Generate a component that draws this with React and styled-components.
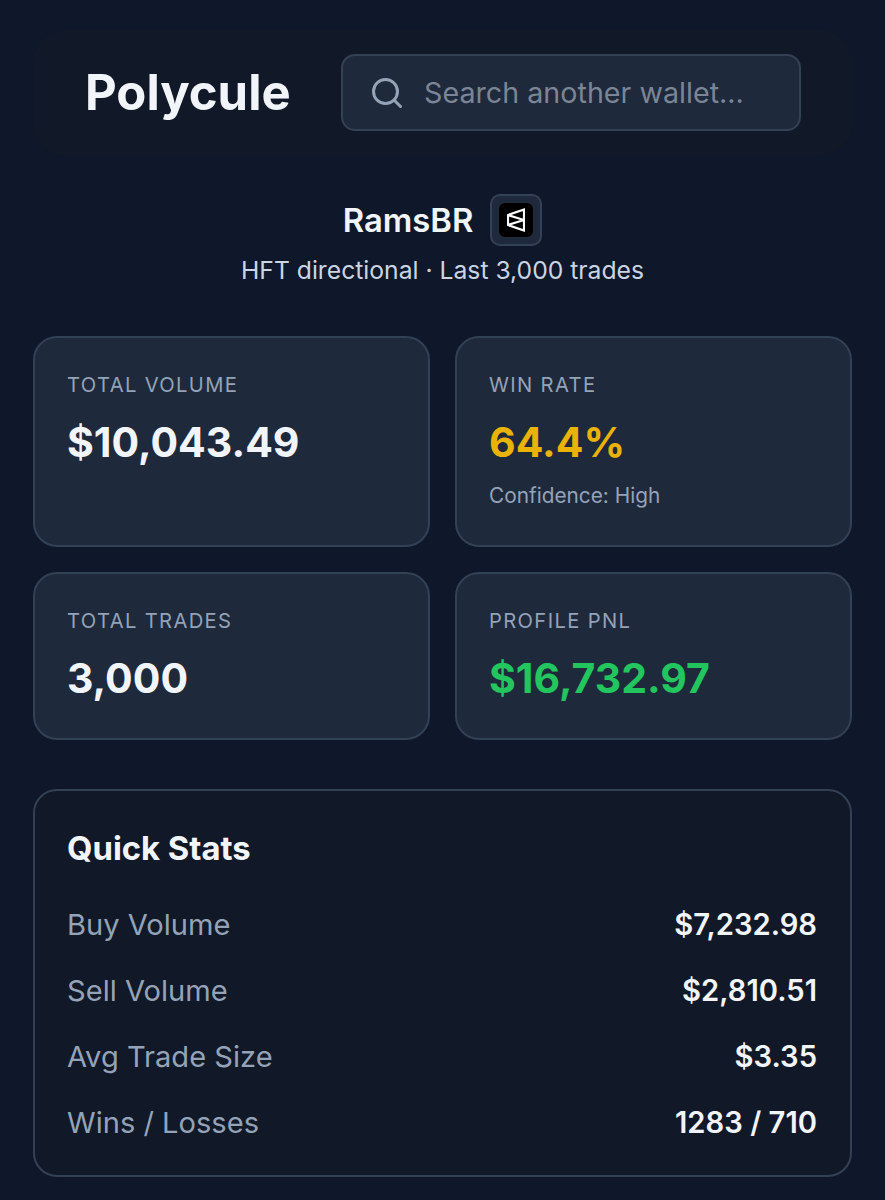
import React from 'react'
import styled, { createGlobalStyle } from 'styled-components'
import { Search } from 'lucide-react'

const GlobalStyle = createGlobalStyle`
  * { box-sizing: border-box; }
  html, body { margin: 0; background: #0f172a; }
  body { font-family: Inter, "Liberation Sans", sans-serif; color: #f1f5f9; }
`

const Page = styled.div`
  width: 885px;
  height: 1200px;
  overflow: hidden;
  padding: 30px 33px 0 33px;
`

const Header = styled.header`
  height: 125px;
  display: flex;
  align-items: center;
  padding: 0 51px 0 52px;
  background: #111827;
  border-radius: 32px;
`

const Brand = styled.h1`
  margin: 0;
  width: 256px;
  font-size: 49px;
  font-weight: 700;
  color: #f1f5f9;
`

const SearchBox = styled.div`
  flex: 1;
  height: 77px;
  display: flex;
  align-items: center;
  gap: 19px;
  padding: 0 26px;
  background: #1e293b;
  border: 2px solid #334155;
  border-radius: 14px;
  color: #94a3b8;
`

const SearchText = styled.span`
  font-size: 28.7px;
  color: #7b8595;
`

const Profile = styled.section`
  margin-top: 39px;
  display: flex;
  flex-direction: column;
  align-items: center;
`

const NameRow = styled.div`
  display: flex;
  align-items: center;
  gap: 17px;
`

const Name = styled.span`
  font-size: 32.8px;
  font-weight: 600;
  color: #f1f5f9;
`

const Badge = styled.div`
  width: 52px;
  height: 52px;
  display: flex;
  align-items: center;
  justify-content: center;
  background: #1e293b;
  border: 2px solid #334155;
  border-radius: 10px;
`

const BadgeInner = styled.div`
  width: 34px;
  height: 34px;
  display: flex;
  align-items: center;
  justify-content: center;
  background: #000;
  border-radius: 6px;
`

const Subtitle = styled.div`
  margin-top: 9px;
  font-size: 24.7px;
  color: #cbd5e1;
`

const Grid = styled.div`
  margin-top: 51px;
  display: grid;
  grid-template-columns: 397px 397px;
  grid-template-rows: 211px 168px;
  gap: 25px;
`

const Card = styled.div`
  padding: 35px 32px;
  background: #1e293b;
  border: 2px solid #334155;
  border-radius: 24px;
`

const CardLabel = styled.div`
  font-size: 20.2px;
  line-height: 24px;
  letter-spacing: 1.35px;
  color: #94a3b8;
`

const CardValue = styled.div`
  margin-top: 19px;
  font-size: 41px;
  line-height: 52px;
  font-weight: 700;
  color: ${(p) => p.$color || '#f1f5f9'};
`

const CardNote = styled.div`
  margin-top: 15px;
  font-size: 20.8px;
  color: #94a3b8;
`

const Panel = styled.section`
  margin-top: 49px;
  height: 388px;
  padding: 38px 33px 0 32px;
  background: #111827;
  border: 2px solid #334155;
  border-radius: 24px;
`

const PanelTitle = styled.h2`
  margin: 0 0 24px;
  font-size: 32.8px;
  line-height: 38px;
  font-weight: 700;
  color: #f1f5f9;
`

const StatRow = styled.div`
  height: 66px;
  display: flex;
  align-items: center;
  justify-content: space-between;
`

const StatLabel = styled.span`
  font-size: 29.1px;
  color: #94a3b8;
`

const StatValue = styled.span`
  font-size: 29.2px;
  font-weight: 600;
  color: #f1f5f9;
`

const cards = [
  { label: 'TOTAL VOLUME', value: '$10,043.49' },
  { label: 'WIN RATE', value: '64.4%', color: '#eab308', note: 'Confidence: High' },
  { label: 'TOTAL TRADES', value: '3,000' },
  { label: 'PROFILE PNL', value: '$16,732.97', color: '#22c55e' },
]

const stats = [
  ['Buy Volume', '$7,232.98'],
  ['Sell Volume', '$2,810.51'],
  ['Avg Trade Size', '$3.35'],
  ['Wins / Losses', '1283 / 710'],
]

export default function App() {
  return (
    <Page>
      <GlobalStyle />
      <Header>
        <Brand>Polycule</Brand>
        <SearchBox>
          <Search size={36} strokeWidth={2} />
          <SearchText>Search another wallet...</SearchText>
        </SearchBox>
      </Header>
      <Profile>
        <NameRow>
          <Name>RamsBR</Name>
          <Badge>
            <BadgeInner>
              <svg width="18" height="24" viewBox="0 0 18 24" fill="none" stroke="#fff" strokeWidth="2.2">
                <path d="M17 1.5 1 7v10l16 5.5z M1 7l16 5-16 5" />
              </svg>
            </BadgeInner>
          </Badge>
        </NameRow>
        <Subtitle>HFT directional · Last 3,000 trades</Subtitle>
      </Profile>
      <Grid>
        {cards.map((c) => (
          <Card key={c.label}>
            <CardLabel>{c.label}</CardLabel>
            <CardValue $color={c.color}>{c.value}</CardValue>
            {c.note && <CardNote>{c.note}</CardNote>}
          </Card>
        ))}
      </Grid>
      <Panel>
        <PanelTitle>Quick Stats</PanelTitle>
        {stats.map(([label, value]) => (
          <StatRow key={label}>
            <StatLabel>{label}</StatLabel>
            <StatValue>{value}</StatValue>
          </StatRow>
        ))}
      </Panel>
    </Page>
  )
}
